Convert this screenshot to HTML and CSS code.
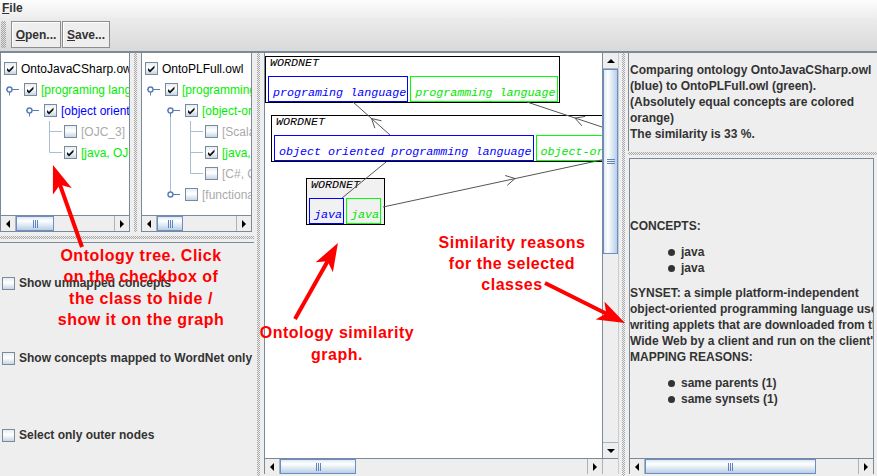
FILE: index.html
```html
<!DOCTYPE html>
<html>
<head>
<meta charset="utf-8">
<link rel="stylesheet" href="styles.css">
</head>
<body>
<div class="app">
  <div class="menubar"><span class="menu"><u>F</u>ile</span></div>
  <div class="toolbar">
    <div class="tgrip"></div>
    <button class="tbtn b-open"><u>O</u>pen...</button>
    <button class="tbtn b-save"><u>S</u>ave...</button>
  </div>
  <div class="sep"></div>
  <div class="main">
    <div class="leftcol">
      <div class="trees">
        <div class="treepane tp1">
          <div class="tree">
            <div class="row"><span class="cb on"><svg viewBox="0 0 11 11" width="11" height="11"><path d="M2 5 L4 7 L8.5 2.5 L8.5 5 L4 9.5 L2 7.5Z" fill="#111"/></svg></span><span class="lbl">OntoJavaCSharp.owl</span></div>
            <div class="row"><svg class="tc" width="20" height="21"><path d="M2 10.5H15M5.5 13V16.5" stroke="#5b7db6" fill="none"/><circle cx="5.5" cy="10.5" r="2.5" fill="#fff" stroke="#5b7db6" stroke-width="1.4"/></svg><span class="cb on"><svg viewBox="0 0 11 11" width="11" height="11"><path d="M2 5 L4 7 L8.5 2.5 L8.5 5 L4 9.5 L2 7.5Z" fill="#111"/></svg></span><span class="lbl g">[programing language]</span></div>
            <div class="row"><span class="blank"></span><svg class="tc" width="20" height="21"><path d="M2 10.5H15M5.5 13V16.5" stroke="#5b7db6" fill="none"/><circle cx="5.5" cy="10.5" r="2.5" fill="#fff" stroke="#5b7db6" stroke-width="1.4"/></svg><span class="cb on"><svg viewBox="0 0 11 11" width="11" height="11"><path d="M2 5 L4 7 L8.5 2.5 L8.5 5 L4 9.5 L2 7.5Z" fill="#111"/></svg></span><span class="lbl b">[object oriented programming language]</span></div>
            <div class="row"><span class="blank"></span><span class="blank"></span><svg class="tc" width="20" height="21"><path d="M5.5 0V21M5.5 10.5H18" stroke="#aabdd3" fill="none"/></svg><span class="cb"></span><span class="lbl gr">[OJC_3]</span></div>
            <div class="row"><span class="blank"></span><span class="blank"></span><svg class="tc" width="20" height="21"><path d="M5.5 0V10.5H18" stroke="#aabdd3" fill="none"/></svg><span class="cb on"><svg viewBox="0 0 11 11" width="11" height="11"><path d="M2 5 L4 7 L8.5 2.5 L8.5 5 L4 9.5 L2 7.5Z" fill="#111"/></svg></span><span class="lbl g">[java, OJC_1]</span></div>
          </div>
          <div class="hscroll">
            <span class="sbtn sl"></span><span class="thumb" style="width:38px"></span><span class="track"></span><span class="sbtn sr"></span>
          </div>
        </div>
        <div class="vdiv vdiv-s"><div class="dots-v"></div></div>
        <div class="treepane tp2">
          <div class="tree">
            <div class="row"><span class="cb on"><svg viewBox="0 0 11 11" width="11" height="11"><path d="M2 5 L4 7 L8.5 2.5 L8.5 5 L4 9.5 L2 7.5Z" fill="#111"/></svg></span><span class="lbl">OntoPLFull.owl</span></div>
            <div class="row"><svg class="tc" width="20" height="21"><path d="M2 10.5H15M5.5 13V16.5" stroke="#5b7db6" fill="none"/><circle cx="5.5" cy="10.5" r="2.5" fill="#fff" stroke="#5b7db6" stroke-width="1.4"/></svg><span class="cb on"><svg viewBox="0 0 11 11" width="11" height="11"><path d="M2 5 L4 7 L8.5 2.5 L8.5 5 L4 9.5 L2 7.5Z" fill="#111"/></svg></span><span class="lbl g">[programming language]</span></div>
            <div class="row"><span class="blank"></span><svg class="tc" width="20" height="21"><path d="M5.5 13V21" stroke="#aabdd3" fill="none"/><path d="M2 10.5H15M5.5 13V16.5" stroke="#5b7db6" fill="none"/><circle cx="5.5" cy="10.5" r="2.5" fill="#fff" stroke="#5b7db6" stroke-width="1.4"/></svg><span class="cb on"><svg viewBox="0 0 11 11" width="11" height="11"><path d="M2 5 L4 7 L8.5 2.5 L8.5 5 L4 9.5 L2 7.5Z" fill="#111"/></svg></span><span class="lbl g">[object-oriented programming language]</span></div>
            <div class="row"><span class="blank"></span><svg class="tc" width="20" height="21"><path d="M5.5 0V21" stroke="#aabdd3" fill="none"/></svg><svg class="tc" width="20" height="21"><path d="M5.5 0V21M5.5 10.5H18" stroke="#aabdd3" fill="none"/></svg><span class="cb"></span><span class="lbl gr">[Scala]</span></div>
            <div class="row"><span class="blank"></span><svg class="tc" width="20" height="21"><path d="M5.5 0V21" stroke="#aabdd3" fill="none"/></svg><svg class="tc" width="20" height="21"><path d="M5.5 0V21M5.5 10.5H18" stroke="#aabdd3" fill="none"/></svg><span class="cb on"><svg viewBox="0 0 11 11" width="11" height="11"><path d="M2 5 L4 7 L8.5 2.5 L8.5 5 L4 9.5 L2 7.5Z" fill="#111"/></svg></span><span class="lbl g">[java, Java]</span></div>
            <div class="row"><span class="blank"></span><svg class="tc" width="20" height="21"><path d="M5.5 0V21" stroke="#aabdd3" fill="none"/></svg><svg class="tc" width="20" height="21"><path d="M5.5 0V10.5H18" stroke="#aabdd3" fill="none"/></svg><span class="cb"></span><span class="lbl gr">[C#, C sharp]</span></div>
            <div class="row"><span class="blank"></span><svg class="tc" width="20" height="21"><path d="M5.5 0V8" stroke="#aabdd3" fill="none"/><path d="M8 10.5H15" stroke="#5b7db6" fill="none"/><circle cx="5.5" cy="10.5" r="2.5" fill="#fff" stroke="#5b7db6" stroke-width="1.4"/></svg><span class="cb"></span><span class="lbl gr">[functional programming language]</span></div>
          </div>
          <div class="hscroll">
            <span class="sbtn sl"></span><span class="thumb" style="width:26px"></span><span class="track"></span><span class="sbtn sr"></span>
          </div>
        </div>
      </div>
      <div class="hdiv"><div class="dots-h"></div></div>
      <div class="options">
        <div class="opt o1"><span class="cb"></span><span>Show unmapped concepts</span></div>
        <div class="opt o2"><span class="cb"></span><span>Show concepts mapped to WordNet only</span></div>
        <div class="opt o3"><span class="cb"></span><span>Select only outer nodes</span></div>
      </div>
    </div>

    <div class="vdiv vdiv-m"><div class="dots-v"></div></div>

    <div class="graphpane">
      <div class="gview">
        <div class="canvas">
          <div class="node n1">
            <div class="nlabel">WORDNET</div>
            <div class="nboxes"><span class="nb blue">programing language</span><span class="nb green">programming language</span></div>
          </div>
          <div class="node n2">
            <div class="nlabel">WORDNET</div>
            <div class="nboxes"><span class="nb blue">object oriented programming language</span><span class="nb green">object-oriented programming language</span></div>
          </div>
          <div class="node n3">
            <div class="nlabel">WORDNET</div>
            <div class="nboxes"><span class="nb blue">java</span><span class="nb green">java</span></div>
          </div>
          <svg class="edges" width="337" height="405" viewBox="0 0 337 405">
            <g stroke="#555" stroke-width="1" fill="none">
              <path d="M125 82 L88 49"/>
              <polyline points="116.5,67.8 106.5,65.5 109.9,75.2"/>
              <path d="M262 49 L355 80"/>
              <polyline points="320.1,63.4 310,65.2 316.9,72.8"/>
              <path d="M77 145 L121 109"/>
              <path d="M118 154 L355 103"/>
              <polyline points="242.3,132.3 250,125.5 240.2,122.5"/>
            </g>
          </svg>
        </div>
        <div class="vscroll">
          <span class="vbtn su"></span><span class="vthumb" style="height:185px"></span><span class="vtrack"></span><span class="vbtn sd"></span>
        </div>
      </div>
      <div class="hscroll gh">
        <span class="sbtn sl"></span><span class="thumb" style="width:76px"></span><span class="track"></span><span class="sbtn sr"></span><span class="corner"></span>
      </div>
    </div>

    <div class="vdiv vdiv-r"><div class="dots-v"></div></div>

    <div class="rightcol">
      <div class="info">
        <div>Comparing ontology OntoJavaCSharp.owl</div>
        <div>(blue) to OntoPLFull.owl (green).</div>
        <div>(Absolutely equal concepts are colored</div>
        <div>orange)</div>
        <div>The similarity is 33 %.</div>
      </div>
      <div class="hdiv hdiv-r"><div class="dots-h"></div></div>
      <div class="reasons">
        <div class="rcontent">
          <div>CONCEPTS:</div>
          <ul class="blist l1"><li>java</li><li>java</li></ul>
          <div>SYNSET: a simple platform-independent</div>
          <div>object-oriented programming language used for</div>
          <div>writing applets that are downloaded from the World</div>
          <div>Wide Web by a client and run on the client's machine</div>
          <div>MAPPING REASONS:</div>
          <ul class="blist l2"><li>same parents (1)</li><li>same synsets (1)</li></ul>
        </div>
        <div class="hscroll">
          <span class="sbtn sl"></span><span class="thumb" style="width:171px"></span><span class="track"></span><span class="sbtn sr"></span>
        </div>
      </div>
    </div>
  </div>

  <div class="annot a1">Ontology tree. Click<br>on the checkbox of<br>the class to hide /<br>show it on the graph</div>
  <div class="annot a2">Ontology similarity<br>graph.</div>
  <div class="annot a3">Similarity reasons<br>for the selected<br>classes</div>
  <svg class="arrows" width="877" height="476" viewBox="0 0 877 476">
    <defs>
      <marker id="ah" viewBox="0 0 28 20" refX="9" refY="10" markerWidth="28" markerHeight="20" markerUnits="userSpaceOnUse" orient="auto">
        <path d="M0 0 L28 10 L0 20 L7 10 Z" fill="#ff0000"/>
      </marker>
    </defs>
    <g stroke="#ff0000" stroke-width="4" fill="none">
      <line x1="82" y1="247" x2="59.3" y2="182.9" marker-end="url(#ah)"/>
      <line x1="295" y1="319" x2="328.6" y2="259.5" marker-end="url(#ah)"/>
      <line x1="545" y1="283" x2="608" y2="314.5" marker-end="url(#ah)"/>
    </g>
  </svg>
</div>
</body>
</html>
```

FILE: styles.css
```css
* { box-sizing: border-box; }
html, body { margin: 0; padding: 0; }
body {
  width: 877px; height: 476px; overflow: hidden;
  background: #eeeeee;
  font-family: "Liberation Sans", Arial, sans-serif;
  font-size: 12px; color: #333333;
}
.app { position: relative; width: 877px; height: 476px; overflow: hidden; }

/* menu + toolbar */
.menubar {
  height: 18px; padding-left: 2px; padding-top: 1px;
  background: linear-gradient(#fdfdfd, #ededed);
  font-weight: bold; line-height: 14px; color: #333;
}
.toolbar {
  height: 33px; display: flex; align-items: flex-start; padding-top: 3px;
  background: linear-gradient(#ececec, #d9d9d9);
}
.tgrip {
  width: 5px; height: 27px; margin: 0 5px 0 1px;
  background: repeating-conic-gradient(#a6a6a6 0 25%, transparent 0 50%) 0 0 / 2px 2px;
}
.tbtn {
  height: 27px; padding: 0; margin: 0 1px 0 0;
  font: bold 12px "Liberation Sans", Arial, sans-serif; color: #333;
  background: #eeeeee; border: 1px solid #8e8e8e;
  box-shadow: inset 1px 1px 0 #ffffff;
}
.b-open { width: 50px; }
.b-save { width: 48px; }
.sep { height: 2px; background: #7a8a99; }

.main { display: flex; height: 423px; }

/* dividers */
.vdiv { flex: none; }
.vdiv-s { width: 11px; padding-left: 4px; }
.vdiv-m { width: 10px; padding-left: 3px; }
.vdiv-r { width: 9px; padding-left: 3px; }
.dots-v {
  width: 3px; height: 100%;
  background: repeating-conic-gradient(#a8a8a8 0 25%, transparent 0 50%) 0 0 / 2px 2px;
}
.hdiv { height: 10px; padding-top: 4px; }
.hdiv-r { height: 7px; padding-top: 1px; }
.dots-h {
  height: 3px; width: 100%;
  background: repeating-conic-gradient(#a8a8a8 0 25%, transparent 0 50%) 0 0 / 2px 2px;
}

/* left column */
.leftcol { width: 254px; flex: none; display: flex; flex-direction: column; }
.trees { height: 179px; display: flex; }
.treepane {
  background: #ffffff; display: flex; flex-direction: column; overflow: hidden;
  border-left: 1px solid #7a8a99; border-right: 1px solid #7a8a99; border-bottom: 1px solid #7a8a99;
}
.tp1 { width: 130px; }
.tp2 { width: 111px; }
.tree { flex: 1; padding: 5px 0 0 3px; overflow: hidden; }
.row { display: flex; align-items: center; height: 21px; white-space: nowrap; }
.blank { width: 20px; height: 21px; flex: none; }
.tc { flex: none; display: block; }
.lbl { margin-left: 4px; color: #000; font-weight: normal; }
.lbl.g { color: #00ee00; }
.lbl.b { color: #0000ff; }
.lbl.gr { color: #aaaaaa; }

.cb {
  width: 13px; height: 13px; flex: none; display: inline-flex; align-items: center; justify-content: center;
  border: 1px solid #7a8a99;
  background: linear-gradient(#e6edf5, #ffffff 45%, #c6d5e6);
}
.cb svg { display: block; }

.options {
  flex: 1; border-top: 1px solid #7a8a99; padding: 32px 0 0 2px;
  font-weight: bold; color: #333;
}
.opt { display: flex; align-items: center; height: 16px; gap: 4px; white-space: nowrap; }
.o2 { margin-top: 59px; }
.o3 { margin-top: 61px; }

/* scrollbars */
.hscroll {
  display: flex; height: 16px; flex: none;
  background: #eeeeee; border-top: 1px solid #7a8a99;
}
.sbtn {
  width: 15px; flex: none; display: flex; align-items: center; justify-content: center;
  background: #eeeeee;
}
.sl { border-right: 1px solid #a9b3bd; }
.sr { border-left: 1px solid #a9b3bd; }
.sl::before {
  content: ""; border-top: 4px solid transparent; border-bottom: 4px solid transparent;
  border-right: 4px solid #000;
}
.sr::before {
  content: ""; border-top: 4px solid transparent; border-bottom: 4px solid transparent;
  border-left: 4px solid #000;
}
.thumb {
  flex: none; display: flex; align-items: center; justify-content: center;
  border: 1px solid #6c8cc6;
  background: linear-gradient(#dde8f3, #ffffff 30%, #b8cfe5);
}
.thumb::before {
  content: ""; width: 5px; height: 8px;
  background: repeating-linear-gradient(to right, #6382bf 0 1px, transparent 1px 2px);
}
.track { flex: 1; }
.corner { width: 16px; flex: none; border-left: 1px solid #a9b3bd; background: #eeeeee; }

.vscroll {
  width: 16px; flex: none; display: flex; flex-direction: column;
  background: #eeeeee; border-left: 1px solid #7a8a99;
}
.vbtn { height: 16px; flex: none; display: flex; align-items: center; justify-content: center; }
.su { border-bottom: 1px solid #a9b3bd; }
.sd { border-top: 1px solid #a9b3bd; }
.su::before {
  content: ""; border-left: 4px solid transparent; border-right: 4px solid transparent;
  border-bottom: 4px solid #000;
}
.sd::before {
  content: ""; border-left: 4px solid transparent; border-right: 4px solid transparent;
  border-top: 4px solid #000;
}
.vthumb {
  flex: none; display: flex; align-items: center; justify-content: center;
  border: 1px solid #6c8cc6;
  background: linear-gradient(to right, #dde8f3, #ffffff 30%, #b8cfe5);
}
.vthumb::before {
  content: ""; width: 8px; height: 5px;
  background: repeating-linear-gradient(to bottom, #6382bf 0 1px, transparent 1px 2px);
}
.vtrack { flex: 1; }

/* graph */
.graphpane {
  width: 355px; flex: none; height: 421px; display: flex; flex-direction: column;
  border-left: 1px solid #7a8a99; border-right: 1px solid #c4ccd4;
}
.gview { display: flex; height: 405px; }
.canvas {
  width: 337px; height: 405px; position: relative; overflow: hidden; background: #ffffff;
  font-family: "Liberation Mono", "Courier New", monospace; font-style: italic; font-size: 11.7px;
}
.node {
  position: absolute; height: 47px; border: 1px solid #000; background: #ffffff;
  display: flex; flex-direction: column; justify-content: space-between;
  padding-left: 2px; white-space: nowrap;
}
.n1 { left: 0; top: 3px; width: 295px; }
.n2 { left: 6px; top: 62px; width: 420px; }
.n3 { left: 41px; top: 125px; width: 79px; background: #f1f1f1; }
.nlabel { line-height: 12px; margin-left: 2px; color: #000; }
.nboxes { display: flex; gap: 2px; }
.nb { height: 26px; border: 1px solid; padding: 10px 1px 0 4px; line-height: 12px; }
.blue { border-color: #0000ff; color: #0000ff; }
.green { border-color: #00ff00; color: #00e600; }
.edges { position: absolute; left: 0; top: 0; }

/* right column */
.rightcol { width: 249px; flex: none; display: flex; flex-direction: column; }
.info {
  height: 98px; border-left: 1px solid #7a8a99; padding: 9px 0 0 1px;
  font-weight: bold; line-height: 16px; white-space: nowrap; overflow: hidden;
}
.reasons {
  height: 316px; margin: 0 3px 0 1px; display: flex; flex-direction: column;
  border-left: 1px solid #7a8a99; border-top: 1px solid #7a8a99; border-right: 1px solid #7a8a99;
}
.rcontent {
  flex: 1; overflow: hidden; padding-top: 59px;
  font-weight: bold; line-height: 16px; white-space: nowrap;
}
.blist { list-style: none; margin: 10px 0 9px 0; padding: 0; }
.blist.l2 { margin-top: 10px; }
.blist li { padding-left: 38px; display: flex; align-items: center; }
.blist li::before {
  content: ""; width: 7px; height: 7px; border-radius: 50%; background: #333;
  margin: 1px 6px 0 0; flex: none;
}

/* annotations overlay */
.annot {
  position: absolute; width: 220px; text-align: center;
  color: #ff0000; font-family: "Liberation Sans", Arial, sans-serif;
  font-weight: bold; font-size: 16px; letter-spacing: 0.5px; white-space: nowrap;
}
.a1 { left: 31px; top: 245px; line-height: 21.4px; }
.a2 { left: 227px; top: 322px; line-height: 22px; }
.a3 { left: 402px; top: 232px; line-height: 21px; }
.arrows { position: absolute; left: 0; top: 0; pointer-events: none; }
```
